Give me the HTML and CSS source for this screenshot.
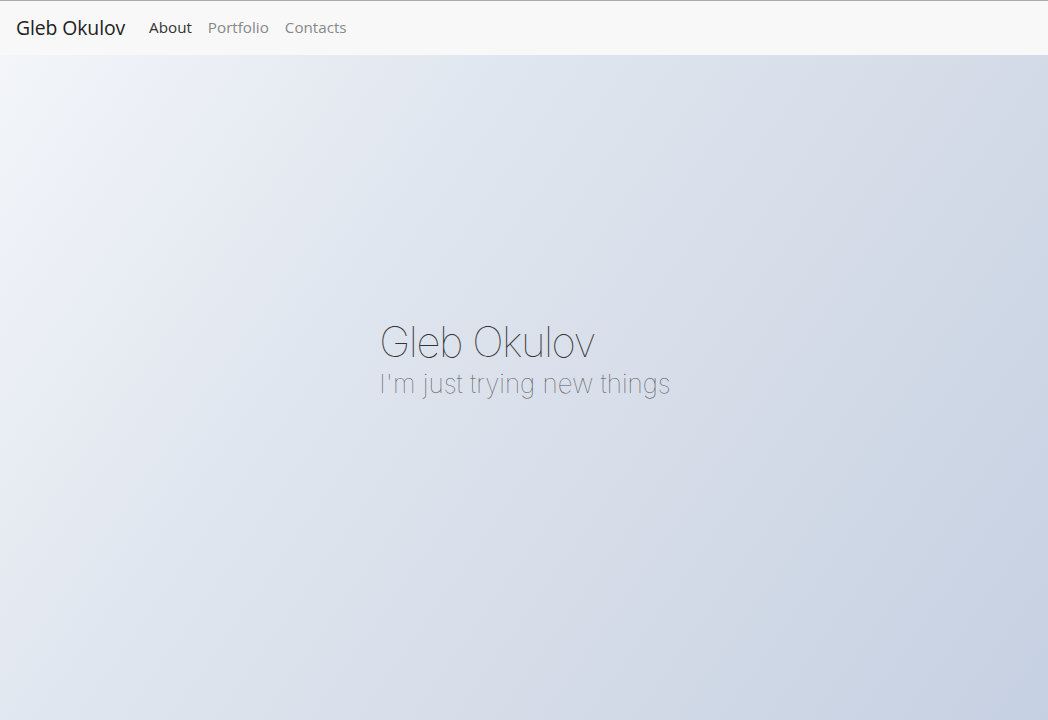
FILE: index.html
```html
<!DOCTYPE html>
<html lang="en">
<head>
<meta charset="utf-8">
<title>Gleb Okulov</title>
<link rel="stylesheet" href="styles.css">
</head>
<body>
<nav class="navbar">
  <a class="brand" href="#">Gleb Okulov</a>
  <ul class="nav">
    <li><a class="nav-link active" href="#">About</a></li>
    <li><a class="nav-link" href="#">Portfolio</a></li>
    <li><a class="nav-link" href="#">Contacts</a></li>
  </ul>
</nav>
<main class="hero">
  <div class="intro">
    <h1 class="title">Gleb Okulov</h1>
    <p class="subtitle">I'm just trying new things</p>
  </div>
</main>
</body>
</html>
```
FILE: styles.css
```css
* { box-sizing: border-box; }
html, body { margin: 0; padding: 0; }
body {
  font-family: "Open Sans", "Noto Sans", sans-serif;
  background: #c8d2e3;
}
.navbar {
  position: fixed;
  top: 0; left: 0; right: 0;
  height: 55px;
  display: flex;
  align-items: center;
  padding: 0 16px 2px;
  background: #f8f8f8;
  border-top: 1px solid #a9a9a9;
  z-index: 10;
}
.brand {
  font-size: 19.4px;
  color: #222;
  text-decoration: none;
  margin-right: 16px;
  letter-spacing: -0.1px;
}
.nav {
  display: flex;
  list-style: none;
  margin: 0; padding: 0;
}
.nav-link {
  display: block;
  padding: 0 8px;
  font-size: 15.2px;
  color: #888;
  text-decoration: none;
}
.nav-link.active { color: #333; }
.hero {
  height: 100vh;
  display: flex;
  align-items: center;
  justify-content: center;
  background: linear-gradient(125deg, #f4f6fa 0%, #e0e6ef 35%, #d5dce8 65%, #c5d0e2 100%);
}
.intro { text-align: left; padding-left: 2px; }
.title {
  margin: 0;
  font-family: "Inter", "Lato", sans-serif;
  font-weight: 100;
  font-size: 42px;
  line-height: 48px;
  color: #333;
  letter-spacing: -1.5px;
}
.subtitle {
  margin: 0;
  font-family: "Inter", "Lato", sans-serif;
  font-weight: 100;
  font-size: 26px;
  line-height: 36px;
  color: #555;
}
```
